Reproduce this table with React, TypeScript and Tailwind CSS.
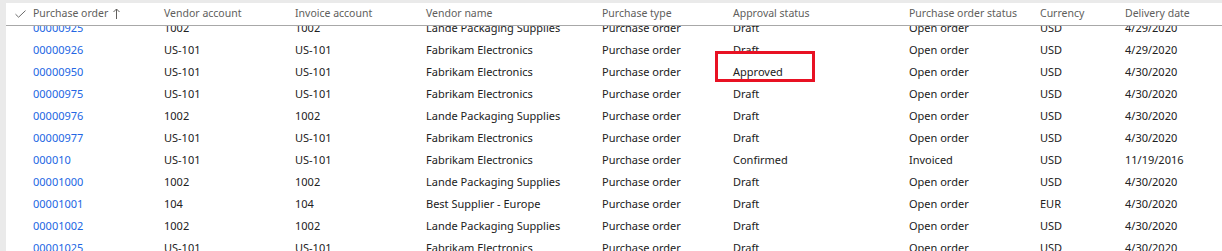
import { Fragment } from "react";

interface Row {
  po: string;
  vendor: string;
  invoice: string;
  name: string;
  type: string;
  approval: string;
  status: string;
  currency: string;
  date: string;
  highlight?: boolean;
}

const rows: Row[] = [
  { po: "00000925", vendor: "1002", invoice: "1002", name: "Lande Packaging Supplies", type: "Purchase order", approval: "Draft", status: "Open order", currency: "USD", date: "4/29/2020" },
  { po: "00000926", vendor: "US-101", invoice: "US-101", name: "Fabrikam Electronics", type: "Purchase order", approval: "Draft", status: "Open order", currency: "USD", date: "4/29/2020" },
  { po: "00000950", vendor: "US-101", invoice: "US-101", name: "Fabrikam Electronics", type: "Purchase order", approval: "Approved", status: "Open order", currency: "USD", date: "4/30/2020", highlight: true },
  { po: "00000975", vendor: "US-101", invoice: "US-101", name: "Fabrikam Electronics", type: "Purchase order", approval: "Draft", status: "Open order", currency: "USD", date: "4/30/2020" },
  { po: "00000976", vendor: "1002", invoice: "1002", name: "Lande Packaging Supplies", type: "Purchase order", approval: "Draft", status: "Open order", currency: "USD", date: "4/30/2020" },
  { po: "00000977", vendor: "US-101", invoice: "US-101", name: "Fabrikam Electronics", type: "Purchase order", approval: "Draft", status: "Open order", currency: "USD", date: "4/30/2020" },
  { po: "000010", vendor: "US-101", invoice: "US-101", name: "Fabrikam Electronics", type: "Purchase order", approval: "Confirmed", status: "Invoiced", currency: "USD", date: "11/19/2016" },
  { po: "00001000", vendor: "1002", invoice: "1002", name: "Lande Packaging Supplies", type: "Purchase order", approval: "Draft", status: "Open order", currency: "USD", date: "4/30/2020" },
  { po: "00001001", vendor: "104", invoice: "104", name: "Best Supplier - Europe", type: "Purchase order", approval: "Draft", status: "Open order", currency: "EUR", date: "4/30/2020" },
  { po: "00001002", vendor: "1002", invoice: "1002", name: "Lande Packaging Supplies", type: "Purchase order", approval: "Draft", status: "Open order", currency: "USD", date: "4/30/2020" },
  { po: "00001025", vendor: "US-101", invoice: "US-101", name: "Fabrikam Electronics", type: "Purchase order", approval: "Draft", status: "Open order", currency: "USD", date: "4/30/2020" },
];

// column widths, measured from where each column's text starts
const cols = ["w-[131px]", "w-[131px]", "w-[131px]", "w-[176px]", "w-[131px]", "w-[176px]", "w-[131px]", "w-[85px]", "flex-1"];

const headers = ["Purchase order", "Vendor account", "Invoice account", "Vendor name", "Purchase type", "Approval status", "Purchase order status", "Currency", "Delivery date"];

function CheckMark() {
  return (
    <svg width="11" height="8" viewBox="0 0 11 8" fill="none">
      <path d="M0.5 4.2 L3.6 7.2 L10.5 0.6" stroke="#6b6b6b" strokeWidth="1" />
    </svg>
  );
}

function SortUp() {
  return (
    <svg width="7" height="11" viewBox="0 0 7 11" fill="none" className="ml-[5px] -mt-[1px]">
      <path d="M3.5 1 V11 M0.5 4 L3.5 1 L6.5 4" stroke="#605e5c" strokeWidth="1" />
    </svg>
  );
}

export default function App() {
  return (
    <div
      className="w-[1222px] h-[251px] overflow-hidden bg-[#eaeaea] pt-[3px] pl-[6px] text-[11px] text-[#212121]"
      style={{ fontFamily: '"Segoe UI", "Noto Sans", "Open Sans", sans-serif' }}
    >
      <div className="h-full bg-white flex flex-col">
        {/* header */}
        <div className="h-[23px] shrink-0 flex items-center border-b border-[#a8a8a8] text-[#605e5c] text-[10.5px]">
          <div className="w-[27px] flex justify-center pl-[1px]">
            <CheckMark />
          </div>
          {headers.map((h, i) => (
            <div key={h} className={`${cols[i]} whitespace-nowrap flex items-center`}>
              {h}
              {i === 0 && <SortUp />}
            </div>
          ))}
        </div>

        {/* body */}
        <div className="flex-1 overflow-hidden">
          <div className="-mt-[9px]">
            {rows.map((r) => (
              <div key={r.po} className="h-[22px] flex items-center">
                <div className="w-[27px]" />
                <div className={`${cols[0]} text-[#2266e3]`}>{r.po}</div>
                <div className={cols[1]}>{r.vendor}</div>
                <div className={cols[2]}>{r.invoice}</div>
                <div className={`${cols[3]} whitespace-nowrap`}>{r.name}</div>
                <div className={cols[4]}>{r.type}</div>
                <div className={`${cols[5]} relative`}>
                  {r.highlight ? (
                    <Fragment>
                      {r.approval}
                      <span className="absolute -left-[18px] -top-[13px] w-[100px] h-[31px] border-[3px] border-[#e81123]" />
                    </Fragment>
                  ) : (
                    r.approval
                  )}
                </div>
                <div className={cols[6]}>{r.status}</div>
                <div className={cols[7]}>{r.currency}</div>
                <div className={cols[8]}>{r.date}</div>
              </div>
            ))}
          </div>
        </div>
      </div>
    </div>
  );
}
